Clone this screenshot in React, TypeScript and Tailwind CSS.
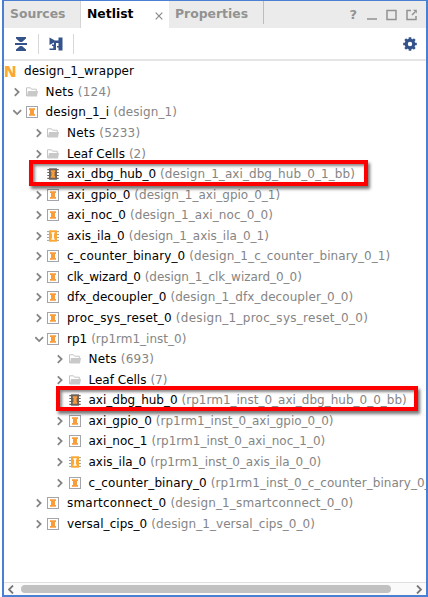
import React from "react";

type Kind = "folder" | "cell" | "blackbox" | "ila";
type Node = {
  level: 1 | 2 | 3;
  state: "open" | "closed" | "leaf";
  kind: Kind;
  name: string;
  detail: string;
  // Extra width in pixels spread over the name and the detail.
  stretch?: [number, number];
};

const nodes: Node[] = [
  { level: 1, state: "closed", kind: "folder", name: "Nets", detail: "(124)", stretch: [1, 1] },
  { level: 1, state: "open", kind: "cell", name: "design_1_i", detail: "(design_1)", stretch: [1, 1] },
  { level: 2, state: "closed", kind: "folder", name: "Nets", detail: "(5233)", stretch: [1, 1] },
  { level: 2, state: "closed", kind: "folder", name: "Leaf Cells", detail: "(2)" },
  { level: 2, state: "leaf", kind: "blackbox", name: "axi_dbg_hub_0", detail: "(design_1_axi_dbg_hub_0_1_bb)", stretch: [0, 2] },
  { level: 2, state: "closed", kind: "cell", name: "axi_gpio_0", detail: "(design_1_axi_gpio_0_1)" },
  { level: 2, state: "closed", kind: "cell", name: "axi_noc_0", detail: "(design_1_axi_noc_0_0)", stretch: [0, 1.5] },
  { level: 2, state: "closed", kind: "ila", name: "axis_ila_0", detail: "(design_1_axis_ila_0_1)" },
  { level: 2, state: "closed", kind: "cell", name: "c_counter_binary_0", detail: "(design_1_c_counter_binary_0_1)", stretch: [2, 2] },
  { level: 2, state: "closed", kind: "cell", name: "clk_wizard_0", detail: "(design_1_clk_wizard_0_0)", stretch: [-2, -1] },
  { level: 2, state: "closed", kind: "cell", name: "dfx_decoupler_0", detail: "(design_1_dfx_decoupler_0_0)", stretch: [1, 2] },
  { level: 2, state: "closed", kind: "cell", name: "proc_sys_reset_0", detail: "(design_1_proc_sys_reset_0_0)", stretch: [3, 8] },
  { level: 2, state: "open", kind: "cell", name: "rp1", detail: "(rp1rm1_inst_0)" },
  { level: 3, state: "closed", kind: "folder", name: "Nets", detail: "(693)", stretch: [1, 1] },
  { level: 3, state: "closed", kind: "folder", name: "Leaf Cells", detail: "(7)" },
  { level: 3, state: "leaf", kind: "blackbox", name: "axi_dbg_hub_0", detail: "(rp1rm1_inst_0_axi_dbg_hub_0_0_bb)" },
  { level: 3, state: "closed", kind: "cell", name: "axi_gpio_0", detail: "(rp1rm1_inst_0_axi_gpio_0_0)", stretch: [0, -0.5] },
  { level: 3, state: "closed", kind: "cell", name: "axi_noc_1", detail: "(rp1rm1_inst_0_axi_noc_1_0)" },
  { level: 3, state: "closed", kind: "ila", name: "axis_ila_0", detail: "(rp1rm1_inst_0_axis_ila_0_0)", stretch: [0, -1.5] },
  { level: 3, state: "closed", kind: "cell", name: "c_counter_binary_0", detail: "(rp1rm1_inst_0_c_counter_binary_0_0)", stretch: [2, 1] },
  { level: 2, state: "closed", kind: "cell", name: "smartconnect_0", detail: "(design_1_smartconnect_0_0)", stretch: [3, 4] },
  { level: 2, state: "closed", kind: "cell", name: "versal_cips_0", detail: "(design_1_versal_cips_0_0)", stretch: [0.5, 1.5] },
];

const indent = { 1: "pl-[9px]", 2: "pl-[30.5px]", 3: "pl-[52px]" };

function Chevron({ state }: { state: Node["state"] }) {
  return (
    <svg className="h-3 w-3 shrink-0" viewBox="0 0 12 12" fill="none" stroke="#858585" strokeWidth="1.8">
      {state === "closed" && <path d="M1.8 2.3 5.6 6.1 1.8 9.9" />}
      {state === "open" && <path d="M.3 4.2 4.2 8.1 8.1 4.2" />}
    </svg>
  );
}

function NodeIcon({ kind }: { kind: Kind }) {
  return (
    <svg className="h-3 w-3 shrink-0" viewBox="0 0 12 12">
      {kind === "folder" && (
        <>
          <path d="M.5 10V1.8h4l1 1.4h4.8v2" fill="none" stroke="#c4c4c4" />
          <path d="M2 5h10l-1 5.5H.7z" fill="#c9c9c9" />
        </>
      )}
      {kind === "cell" && (
        <>
          <rect x=".5" y=".5" width="11" height="11" fill="#fff" stroke="#a3a5ab" />
          <path d="M3 2.3h6v1.8H8v3.8h1v1.8H3V7.9h1V4.1H3z" fill="#f99d3b" />
        </>
      )}
      {kind === "blackbox" && (
        <>
          <path d="M.3 1.6h11.4M.3 4.5h11.4M.3 7.5h11.4M.3 10.4h11.4" stroke="#68625e" strokeWidth="1.2" />
          <rect x="2" y=".3" width="8" height="11.4" fill="#6b625c" />
          <path d="M3.8 2.2h4.4v1.7h-.6v4.2h.6v1.7H3.8V8.1h.6V3.9h-.6z" fill="#f99d3b" />
        </>
      )}
      {kind === "ila" && (
        <>
          <path d="M0 1.6h12M0 4.5h12M0 7.5h12M0 10.4h12" stroke="#a2a2a2" />
          <rect x="2" y=".3" width="8" height="11.4" fill="#fba834" />
          <path d="M4.3 2.3h3.4v1.1h-.8v5.2h.8v1.1H4.3V8.6h.8V3.4h-.8z" fill="#fff" />
        </>
      )}
    </svg>
  );
}

function TreeRow({ node }: { node: Node }) {
  const [nameExtra, detailExtra] = node.stretch ?? [0, 0];
  return (
    <div className={`flex h-[20.57px] items-center whitespace-pre ${indent[node.level]}`}>
      <Chevron state={node.state} />
      <span className="w-[0.5px] shrink-0" />
      <NodeIcon kind={node.kind} />
      <span className="ml-[8px] text-black" style={{ letterSpacing: nameExtra / node.name.length }}>{node.name}</span>
      <span className="ml-[4px] text-[#858585]" style={{ letterSpacing: detailExtra / node.detail.length }}>{node.detail}</span>
    </div>
  );
}

export default function App() {
  return (
    <div className="relative h-[597px] w-[428px] overflow-hidden bg-white pl-[2px] font-['DejaVu_Sans',sans-serif] text-[12px]">
      <div className="flex h-[597px] flex-col overflow-hidden border-t border-r-2 border-b-2 border-l-2 border-[#4a7fd2] bg-white">
        <div className="flex h-[27px] shrink-0 items-center bg-[#ebebeb] text-[12.4px] font-bold text-[#929292]">
          <div className="flex h-full w-[77px] items-center border-r border-[#d5d5d5] pl-[6px]">Sources</div>
          <div className="flex h-full w-[88px] items-center justify-between bg-white pr-[6px] pl-[6px] text-black">
            Netlist
            <svg className="mt-[3px] h-2 w-2" viewBox="0 0 8 8" stroke="#8a8a8a" strokeWidth="1.2"><path d="m.7.7 6.6 6.6M7.3.7.7 7.3" /></svg>
          </div>
          <div className="flex h-full items-center pl-[6px]">Properties</div>
          <div className="mb-[4px] ml-auto h-[23px] w-px bg-[#bdbdbd]" />
          <div className="ml-[85px] text-[13px]">?</div>
          <svg className="mr-[9px] ml-[10px] h-[12px] w-[50px]" viewBox="0 0 50 12" fill="none" stroke="#929292" strokeWidth="1.5">
            <path d="M0 10h10M20 1.5h9v9h-9zM44 1.5h-4v9h9V7M45 6l3-3" />
            <path d="M46 .8h3.8v3.8z" fill="#929292" stroke="none" />
          </svg>
        </div>
        <div className="flex h-[33px] shrink-0 items-center border-b-2 border-[#e5e5e5]">
          <svg className="ml-[11px] h-[14px] w-[12px]" viewBox="0 0 12 14" fill="#34538a"><path d="M1 0h10v1.6L7 5H5L1 1.6zM0 6.1h12v1.8H0zM5 9h2l4 3.4V14H1v-1.6z" /></svg>
          <div className="ml-[11px] h-5 w-px bg-[#d8d8d8]" />
          <svg className="ml-[10px] h-[14px] w-[14px]" viewBox="0 0 14 14" fill="#34538a"><path d="M.5.5 5.5 3.3V3.5H9.5V.5h4v13h-4v-3H8V9h1.5V6H7v7H.5v-1.5h3.8V9H3V7.6h2V5.5L.5 8z" /></svg>
          <div className="ml-[10px] h-5 w-px bg-[#d8d8d8]" />
          <svg className="mr-[9px] ml-auto h-[14px] w-[14px]" viewBox="-7 -7 14 14" stroke="#34538a" fill="none">
            <circle r="3.8" strokeWidth="3.2" />
            <path d="M0-6.8V-4M0 6.8V4M-6.8 0h2.8M6.8 0H4M-4.8-4.8l2 2M4.8-4.8l-2 2M-4.8 4.8l2-2M4.8 4.8l-2-2" strokeWidth="2.6" />
          </svg>
        </div>
        <div className="min-h-0 flex-1 overflow-hidden">
          <div className="flex h-[20.57px] items-center whitespace-pre text-black">
            <span className="w-[20px] shrink-0 font-['Noto_Sans',sans-serif] text-[15px] leading-none font-black text-[#fba834]">N</span>
            <span className="tracking-[0.06px]">design_1_wrapper</span>
          </div>
          {nodes.map((node, i) => <TreeRow key={i} node={node} />)}
        </div>
        <div className="flex h-[13px] shrink-0 items-center justify-between border-t border-[#e0e0e0] bg-[#fafafa] px-[4px]">
          <svg className="h-[9px] w-[6px]" viewBox="0 0 6 9" fill="none" stroke="#777" strokeWidth="1.8"><path d="M5 .5 1 4.5l4 4" /></svg>
          <div className="mr-auto ml-[7px] h-2 w-[370px] rounded-full bg-[#c1c1c1]" />
          <svg className="h-[9px] w-[6px]" viewBox="0 0 6 9" fill="none" stroke="#777" strokeWidth="1.8"><path d="m1 .5 4 4-4 4" /></svg>
        </div>
      </div>
      <div className="absolute top-[160px] left-[29px] h-[26px] w-[339px] border-4 border-[#fe0000] shadow-[2px_3px_3px_#0008,inset_2px_2px_3px_#0007]" />
      <div className="absolute top-[386px] left-[56px] h-[25px] w-[362px] border-4 border-[#fe0000] shadow-[2px_3px_3px_#0008,inset_2px_2px_3px_#0007]" />
    </div>
  );
}
